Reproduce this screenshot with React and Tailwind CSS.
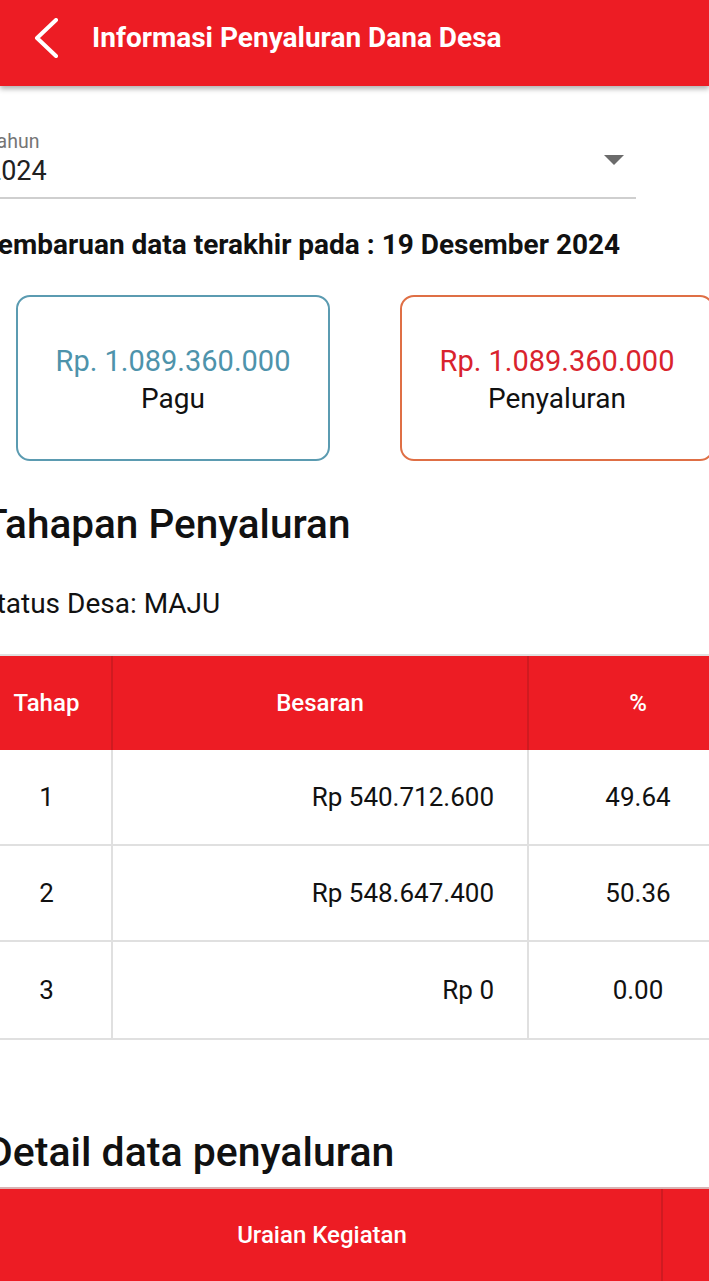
export default function App() {
  const rows = [
    { t: "1", b: "Rp 540.712.600", p: "49.64" },
    { t: "2", b: "Rp 548.647.400", p: "50.36" },
    { t: "3", b: "Rp 0", p: "0.00" },
  ];
  return (
    <div className="w-[709px] h-[1281px] overflow-hidden bg-white relative flex flex-col" style={{ fontFamily: "Roboto, 'Noto Sans', sans-serif" }}>
      <div className="h-[86px] shrink-0 bg-[#ED1C24] shadow-[0_3px_5px_rgba(0,0,0,0.3)] relative z-10">
        <div className="h-[75px] flex items-center">
          <svg className="ml-[33px]" width="26" height="40" viewBox="0 0 26 40">
            <path d="M23 2 L4 20 L23 38" fill="none" stroke="white" strokeWidth="4" strokeLinecap="round" strokeLinejoin="round" />
          </svg>
          <div className="ml-[33px] text-white font-bold text-[28px] leading-none">Informasi Penyaluran Dana Desa</div>
        </div>
      </div>

      <div className="ml-[-14px] flex flex-col">
        {/* Dropdown */}
        <div className="w-[650px] mt-[44px] relative border-b-2 border-[#CFCFCF] pb-[10px]">
          <div className="text-[19.5px] leading-[24px] text-[#757575]">Tahun</div>
          <div className="text-[27px] leading-[32px] text-[#212121] mt-[1px]">2024</div>
          <div className="absolute right-[12px] top-[25px] w-0 h-0 border-l-[10px] border-r-[10px] border-t-[10px] border-l-transparent border-r-transparent border-t-[#6B6B6B]" />
        </div>

        <div className="mt-[29px] ml-[-6px] font-bold text-[28px] leading-[34px] text-[#111] whitespace-nowrap">Pembaruan data terakhir pada : 19 Desember 2024</div>

        {/* Cards */}
        <div className="mt-[33px] flex gap-[70px] pl-[30px]">
          <div className="w-[314px] h-[166px] shrink-0 rounded-[14px] border-2 border-[#5B9BB1] flex flex-col items-center justify-center pt-[4px]">
            <div className="text-[29px] leading-[38px] text-[#4E93AB]">Rp. 1.089.360.000</div>
            <div className="text-[28px] leading-[38px] text-[#111]">Pagu</div>
          </div>
          <div className="w-[314px] h-[166px] shrink-0 rounded-[14px] border-2 border-[#DF6F45] flex flex-col items-center justify-center pt-[4px]">
            <div className="text-[29px] leading-[38px] text-[#D9232D]">Rp. 1.089.360.000</div>
            <div className="text-[28px] leading-[38px] text-[#111]">Penyaluran</div>
          </div>
        </div>

        <div className="mt-[39px] ml-[-3px] font-medium text-[40.5px] leading-[48px] text-[#111] whitespace-nowrap">Tahapan Penyaluran</div>
        <div className="mt-[40px] ml-[-6px] text-[28px] leading-[32px] text-[#111] whitespace-nowrap">Status Desa: MAJU</div>

        {/* Table */}
        <div className="mt-[34px] w-[800px] ml-[-4px] border-t-2 border-[#E0E0E0]">
          <div className="flex h-[94px] bg-[#ED1C24] text-white font-medium text-[24px]">
            <div className="w-[131px] shrink-0 flex items-center justify-center border-r-2 border-[#D01A20]">Tahap</div>
            <div className="w-[416px] shrink-0 flex items-center justify-center border-r-2 border-[#D01A20]">Besaran</div>
            <div className="w-[218px] shrink-0 flex items-center justify-center">%</div>
          </div>
          {rows.map((r, i) => (
            <div key={r.t} className={`flex ${i === 2 ? "h-[98px]" : "h-[96px]"} border-b-2 border-[#E0E0E0] text-[26px] text-[#111]`}>
              <div className="w-[131px] shrink-0 flex items-center justify-center border-r-2 border-[#E0E0E0]">{r.t}</div>
              <div className="w-[416px] shrink-0 flex items-center justify-end pr-[33px] border-r-2 border-[#E0E0E0]">{r.b}</div>
              <div className="w-[218px] shrink-0 flex items-center justify-center">{r.p}</div>
            </div>
          ))}
        </div>

        <div className="mt-[88px] font-medium text-[41px] leading-[48px] text-[#111] whitespace-nowrap">Detail data penyaluran</div>
      </div>

      <div className="absolute left-0 right-0 top-[1187px] bottom-0 bg-[#ED1C24] border-t-2 border-[#D9B3B3] flex overflow-hidden">
        <div className="w-[680px] ml-[-17px] shrink-0 flex items-center justify-center text-white font-medium text-[24px] border-r-2 border-[#CF1A21]">Uraian Kegiatan</div>
        <div className="flex-1" />
      </div>
    </div>
  );
}
